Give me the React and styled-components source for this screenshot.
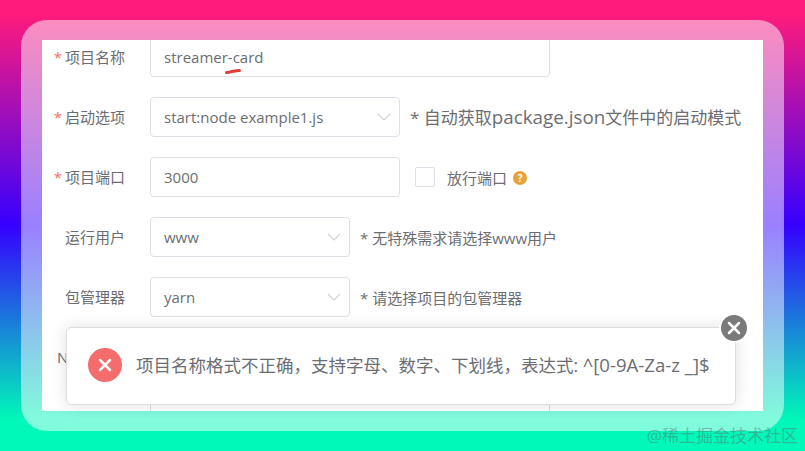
import React from 'react';
import styled, { createGlobalStyle } from 'styled-components';
import { X } from 'lucide-react';

const GlobalStyle = createGlobalStyle`
	html, body {
		margin: 0;
		padding: 0;
	}
	body {
		font-family: "Open Sans", "Noto Sans CJK SC", sans-serif;
	}
`;

const Page = styled.div`
	position: relative;
	box-sizing: border-box;
	width: 805px;
	height: 451px;
	padding: 20px 21px;
	overflow: hidden;
	background: linear-gradient(180deg, #ff1b7b 0%, #ff1b7b 3%, #3500ff 50%, #00f8b8 93%, #00f8b8 100%);
`;

const Glass = styled.div`
	box-sizing: border-box;
	width: 763px;
	height: 411px;
	padding: 20px 21px;
	border-radius: 26px;
	background: rgba(255, 255, 255, 0.5);
`;

const Sheet = styled.div`
	position: relative;
	width: 721px;
	height: 371px;
	overflow: hidden;
	background: #fff;
`;

const Form = styled.div`
	display: flex;
	flex-direction: column;
	gap: 20px;
	margin-top: -3px;
`;

const Row = styled.div`
	display: flex;
	align-items: center;
	height: 40px;
`;

const Label = styled.div`
	box-sizing: border-box;
	flex: none;
	width: 83px;
	margin-right: 25px;
	margin-top: -2px;
	text-align: right;
	font-size: 15px;
	color: #6b6d72;
	white-space: nowrap;
	&::before {
		content: ${({ $required }) => ($required ? "'*'" : 'none')};
		margin-right: 3px;
		color: #f56c6c;
	}
`;

const Field = styled.div`
	position: relative;
	box-sizing: border-box;
	flex: none;
	display: flex;
	align-items: center;
	justify-content: space-between;
	width: ${({ $width }) => $width}px;
	height: 40px;
	padding: 0 8px 0 13px;
	border: 1px solid #dcdfe6;
	border-radius: 4px;
	font-size: 15px;
	color: #6b6d72;
`;

const Squiggle = styled.svg`
	position: absolute;
	left: 74px;
	top: 31px;
`;

const Chevron = styled.svg`
	flex: none;
	color: #cdd0d6;
`;

const Hint = styled.div`
	margin-left: 10px;
	margin-top: ${({ $big }) => ($big ? -1 : 0)}px;
	font-size: ${({ $big }) => ($big ? 17 : 15)}px;
	color: #6b6d72;
	white-space: nowrap;
`;

const LatinPart = styled.span`
	font-size: 18.8px;
`;

const Checkbox = styled.span`
	flex: none;
	box-sizing: border-box;
	width: 20px;
	height: 20px;
	margin-left: 15px;
	border: 1px solid #dcdfe6;
	border-radius: 2px;
`;

const CheckLabel = styled.span`
	margin-left: 12px;
	font-size: 15px;
	color: #6b6d72;
`;

const HelpIcon = styled.span`
	display: flex;
	align-items: center;
	justify-content: center;
	width: 14px;
	height: 14px;
	margin-left: 6px;
	margin-top: 2px;
	border-radius: 50%;
	background: #e6a23c;
	color: #fff;
	font-size: 10px;
	font-weight: 700;
	line-height: 1;
`;

const Toast = styled.div`
	position: absolute;
	left: 66px;
	top: 327px;
	box-sizing: border-box;
	display: flex;
	align-items: center;
	gap: 14px;
	width: 670px;
	height: 78px;
	padding: 0 0 0 21px;
	background: #fff;
	border: 1px solid #dedede;
	border-radius: 5px;
	box-shadow: 0 0 16px rgba(0, 0, 0, 0.13);
`;

const ErrorIcon = styled.span`
	flex: none;
	display: flex;
	align-items: center;
	justify-content: center;
	width: 34px;
	height: 34px;
	margin-top: -2px;
	border-radius: 50%;
	background: #f56c6c;
	color: #fff;
`;

const ToastText = styled.span`
	margin-top: -3px;
	font-size: 17.5px;
	color: #6b6d72;
	white-space: nowrap;
`;

const Regex = styled.span`
	font-size: 18.6px;
`;

const CloseButton = styled.span`
	position: absolute;
	right: -12px;
	top: -13px;
	display: flex;
	align-items: center;
	justify-content: center;
	width: 26px;
	height: 26px;
	border-radius: 50%;
	background: #7a7a7a;
	color: #fff;
	box-shadow: 0 0 0 2px rgba(255, 255, 255, 0.85);
`;

const Watermark = styled.div`
	position: absolute;
	right: 7px;
	bottom: 4px;
	font-size: 17px;
	color: rgba(90, 120, 120, 0.5);
	white-space: nowrap;
`;

const Arrow = () => (
	<Chevron width="14" height="8" viewBox="0 0 14 8" fill="none" stroke="currentColor" strokeWidth="1.1">
		<path d="M1 1l6 6 6-6" />
	</Chevron>
);

const App = () => {
	return (
		<>
			<GlobalStyle />
			<Page>
				<Glass>
					<Sheet>
						<Form>
							<Row>
								<Label $required>项目名称</Label>
								<Field $width={400}>
									streamer-card
									<Squiggle width="16" height="5" viewBox="0 0 16 5">
										<path d="M1.5 3.5c4 0 8-2 13-2" stroke="#e23b3b" strokeWidth="3" strokeLinecap="round" fill="none" />
									</Squiggle>
								</Field>
							</Row>
							<Row>
								<Label $required>启动选项</Label>
								<Field $width={250}>
									start:node example1.js
									<Arrow />
								</Field>
								<Hint $big>
									* 自动获取<LatinPart>package.json</LatinPart>文件中的启动模式
								</Hint>
							</Row>
							<Row>
								<Label $required>项目端口</Label>
								<Field $width={250}>3000</Field>
								<Checkbox />
								<CheckLabel>放行端口</CheckLabel>
								<HelpIcon>?</HelpIcon>
							</Row>
							<Row>
								<Label>运行用户</Label>
								<Field $width={200}>
									www
									<Arrow />
								</Field>
								<Hint>* 无特殊需求请选择www用户</Hint>
							</Row>
							<Row>
								<Label>包管理器</Label>
								<Field $width={200}>
									yarn
									<Arrow />
								</Field>
								<Hint>* 请选择项目的包管理器</Hint>
							</Row>
							<Row>
								<Label>Node版本</Label>
							</Row>
							<Row>
								<Label />
								<Field $width={400} />
							</Row>
						</Form>
					</Sheet>
				</Glass>
				<Toast>
					<ErrorIcon>
						<X size={20} strokeWidth={3} />
					</ErrorIcon>
					<ToastText>
						项目名称格式不正确，支持字母、数字、下划线，表达式: <Regex>^[0-9A-Za-z _]$</Regex>
					</ToastText>
					<CloseButton>
						<X size={20} strokeWidth={3} />
					</CloseButton>
				</Toast>
				<Watermark>@稀土掘金技术社区</Watermark>
			</Page>
		</>
	);
};

export default App;
